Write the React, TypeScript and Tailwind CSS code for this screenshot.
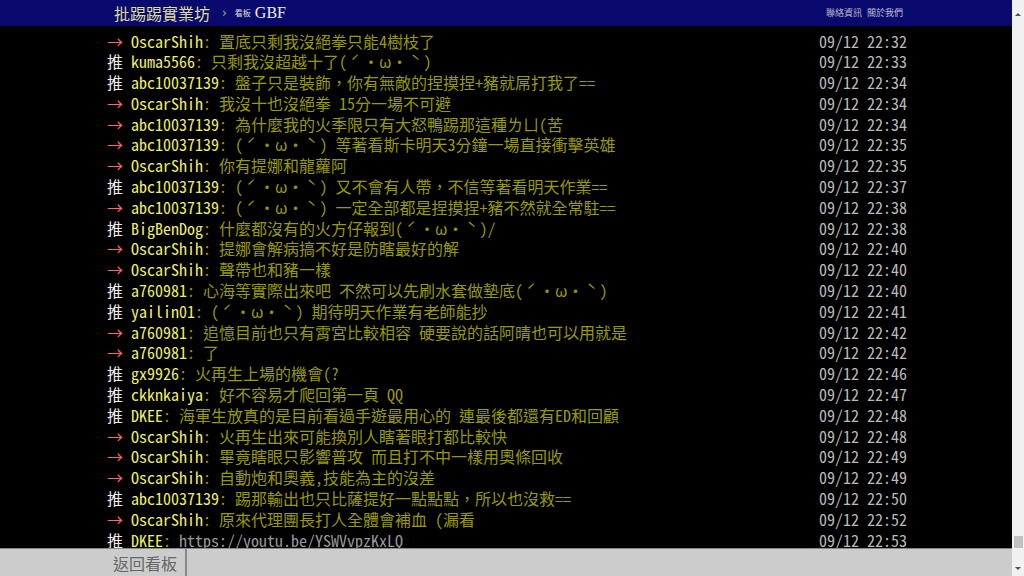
import React from "react";

type Push = {
  tag: "推" | "→";
  user: string;
  text: string;
  time: string;
  link?: boolean;
};

const pushes: Push[] = [
  { tag: "→", user: "OscarShih", text: "置底只剩我沒絕拳只能4樹枝了", time: "09/12 22:32" },
  { tag: "推", user: "kuma5566", text: "只剩我沒超越十了(ˊ・ω・ˋ)", time: "09/12 22:33" },
  { tag: "推", user: "abc10037139", text: "盤子只是裝飾，你有無敵的捏摸捏+豬就屌打我了==", time: "09/12 22:34" },
  { tag: "→", user: "OscarShih", text: "我沒十也沒絕拳 15分一場不可避", time: "09/12 22:34" },
  { tag: "→", user: "abc10037139", text: "為什麼我的火季限只有大怒鴨踢那這種ㄌㄩ(苦", time: "09/12 22:34" },
  { tag: "→", user: "abc10037139", text: "(ˊ・ω・ˋ) 等著看斯卡明天3分鐘一場直接衝擊英雄", time: "09/12 22:35" },
  { tag: "→", user: "OscarShih", text: "你有提娜和龍蘿阿", time: "09/12 22:35" },
  { tag: "推", user: "abc10037139", text: "(ˊ・ω・ˋ) 又不會有人帶，不信等著看明天作業==", time: "09/12 22:37" },
  { tag: "→", user: "abc10037139", text: "(ˊ・ω・ˋ) 一定全部都是捏摸捏+豬不然就全常駐==", time: "09/12 22:38" },
  { tag: "推", user: "BigBenDog", text: "什麼都沒有的火方仔報到(ˊ・ω・ˋ)/", time: "09/12 22:38" },
  { tag: "→", user: "OscarShih", text: "提娜會解病搞不好是防瞎最好的解", time: "09/12 22:40" },
  { tag: "→", user: "OscarShih", text: "聲帶也和豬一樣", time: "09/12 22:40" },
  { tag: "推", user: "a760981", text: "心海等實際出來吧 不然可以先刷水套做墊底(ˊ・ω・ˋ)", time: "09/12 22:40" },
  { tag: "推", user: "yailin01", text: "(ˊ・ω・ˋ) 期待明天作業有老師能抄", time: "09/12 22:41" },
  { tag: "→", user: "a760981", text: "追憶目前也只有霄宮比較相容 硬要說的話阿晴也可以用就是", time: "09/12 22:42" },
  { tag: "→", user: "a760981", text: "了", time: "09/12 22:42" },
  { tag: "推", user: "gx9926", text: "火再生上場的機會(?", time: "09/12 22:46" },
  { tag: "推", user: "ckknkaiya", text: "好不容易才爬回第一頁 QQ", time: "09/12 22:47" },
  { tag: "推", user: "DKEE", text: "海軍生放真的是目前看過手遊最用心的 連最後都還有ED和回顧", time: "09/12 22:48" },
  { tag: "→", user: "OscarShih", text: "火再生出來可能換別人瞎著眼打都比較快", time: "09/12 22:48" },
  { tag: "→", user: "OscarShih", text: "畢竟瞎眼只影響普攻 而且打不中一樣用奧條回收", time: "09/12 22:49" },
  { tag: "→", user: "OscarShih", text: "自動炮和奧義,技能為主的沒差", time: "09/12 22:49" },
  { tag: "推", user: "abc10037139", text: "踢那輸出也只比薩提好一點點點，所以也沒救==", time: "09/12 22:50" },
  { tag: "→", user: "OscarShih", text: "原來代理團長打人全體會補血 (漏看", time: "09/12 22:52" },
  { tag: "推", user: "DKEE", text: "https://youtu.be/YSWVvpzKxLQ", time: "09/12 22:53", link: true },
];

// tone marks are full-width in the terminal font, half-width in ours
const renderText = (text: string) =>
  text.split(/([ˊˋ])/).map((part, i) =>
    part === "ˊ" || part === "ˋ" ? (
      <span key={i} className="inline-block w-[1em] text-center">
        {part}
      </span>
    ) : (
      part
    )
  );

const PushRow: React.FC<{ push: Push }> = ({ push }) => (
  <div className="flex h-[20.8px] leading-[20.8px] whitespace-pre">
    <span className={push.tag === "推" ? "text-[#eee]" : "text-[#f66]"}>{push.tag} </span>
    <span className="text-[#ee6]">{push.user}</span>
    <span className="text-[#990]">
      :{" "}
      {push.link ? (
        <a href="#" className="text-[#999] underline">
          {push.text}
        </a>
      ) : (
        renderText(push.text)
      )}
    </span>
    <span className="ml-auto text-[#bbb]">{push.time}</span>
  </div>
);

export default function App() {
  return (
    <div className="flex h-[576px] w-[1024px] overflow-hidden bg-black">
      {/* Page */}
      <div className="flex min-w-0 flex-1 flex-col">
        {/* Top bar */}
        <div className="flex h-[26px] shrink-0 bg-[#0a0a6e]">
          <div className="ml-[107px] flex w-[800px] items-center pl-[7px] pr-[4px]">
            <span className="font-['Noto_Sans_CJK_TC',sans-serif] text-[16px] text-[#dd9]">批踢踢實業坊</span>
            <span className="ml-[12px] text-[12px] text-[#aaa] font-['DejaVu_Sans',sans-serif]">›</span>
            <span className="ml-[8px] font-['Noto_Sans_CJK_TC',sans-serif] text-[8px] text-[#ddd]">看板</span>
            <span className="ml-[4px] font-['Liberation_Serif',serif] text-[16px] text-[#eee]">GBF</span>
            <div className="ml-auto flex gap-[5px] font-['Noto_Sans_CJK_TC',sans-serif] text-[9px] text-[#bbc]">
              <span>聯絡資訊</span>
              <span>關於我們</span>
            </div>
          </div>
        </div>

        {/* Comments */}
        <div className="flex-1 overflow-hidden pt-[4.5px]">
          <div className="ml-[107px] w-[800px] font-['Noto_Sans_Mono_CJK_TC','Noto_Sans_CJK_TC',monospace] text-[16px]">
            {pushes.map((p, i) => (
              <PushRow key={i} push={p} />
            ))}
          </div>
        </div>

        {/* Footer nav */}
        <div className="flex h-[28px] shrink-0 border-t border-[#888] bg-[#ccc]">
          <div className="ml-[107px] flex w-[800px]">
            <div className="flex w-[80px] items-center border-r-2 border-[#888] pl-[6px] font-['Noto_Sans_CJK_TC',sans-serif] text-[16px] text-[#666]">
              返回看板
            </div>
          </div>
        </div>
      </div>

      {/* Scrollbar */}
      <div className="flex w-[12px] shrink-0 flex-col items-center bg-[#f1f1f1]">
        <div className="mt-[13px] h-0 w-0 border-x-[3px] border-b-[3px] border-x-transparent border-b-[#505050]" />
        <div className="flex-1" />
        <div className="ml-[1px] h-[12px] w-[9px] bg-[#c1c1c1]" />
        <div className="mt-[19px] h-0 w-0 border-x-[3px] border-t-[3px] border-x-transparent border-t-[#505050]" />
        <div className="h-[6px]" />
      </div>
    </div>
  );
}
